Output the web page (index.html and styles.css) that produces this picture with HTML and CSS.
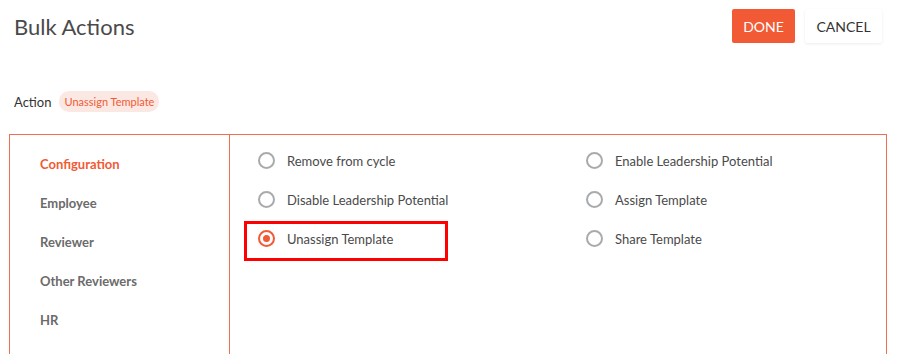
FILE: index.html
```html
<!DOCTYPE html>
<html lang="en">
<head>
    <meta charset="UTF-8">
    <meta name="viewport" content="width=device-width, initial-scale=1.0">
    <title>Bulk Actions</title>
    <link rel="stylesheet" href="styles.css">
</head>
<body>

    <div class="header">
        <h1>Bulk Actions</h1>
        <div class="buttons">
            <button class="btn btn-done">DONE</button>
            <button class="btn btn-cancel">CANCEL</button>
        </div>
    </div>

    <!-- Selected action -->
    <div class="action-row">
        <span class="action-label">Action</span>
        <span class="badge">Unassign Template</span>
    </div>

    <div class="panel">
        <ul class="sidebar">
            <li class="active">Configuration</li>
            <li>Employee</li>
            <li>Reviewer</li>
            <li>Other Reviewers</li>
            <li>HR</li>
        </ul>

        <div class="options">
            <label class="option"><span class="radio"></span>Remove from cycle</label>
            <label class="option"><span class="radio"></span>Enable Leadership Potential</label>
            <label class="option"><span class="radio"></span>Disable Leadership Potential</label>
            <label class="option"><span class="radio"></span>Assign Template</label>
            <label class="option selected highlight"><span class="radio"></span>Unassign Template</label>
            <label class="option"><span class="radio"></span>Share Template</label>
        </div>
    </div>

</body>
</html>
```

FILE: styles.css
```css
body {
    margin: 0;
    font-family: Lato, "Open Sans", sans-serif;
    color: #4a4a4a;
    background-color: #fff;
    overflow: hidden;
}
.header {
    display: flex;
    justify-content: space-between;
    align-items: center;
    padding: 9px 15px 0 14px;
    height: 34px;
}
h1 {
    margin: 0;
    font-size: 22px;
    font-weight: 400;
    color: #4a4a4a;
}
.buttons {
    display: flex;
    gap: 10px;
}
.btn {
    height: 34px;
    font-family: inherit;
    font-size: 14px;
    border: none;
    border-radius: 2px;
    cursor: pointer;
}
.btn-done {
    width: 63px;
    background-color: #f15a35;
    color: #fff;
}
.btn-cancel {
    width: 77px;
    background-color: #fff;
    color: #333;
    box-shadow: 0 1px 3px rgba(0, 0, 0, 0.08);
}
.action-row {
    display: flex;
    align-items: center;
    gap: 8px;
    margin: 48px 0 0 14px;
    height: 21px;
}
.action-label {
    font-size: 13px;
    color: #333;
}
.badge {
    background-color: #fce8e3;
    color: #f15a35;
    font-size: 11px;
    padding: 0 5px;
    height: 21px;
    line-height: 21px;
    border-radius: 10px;
}
.panel {
    display: flex;
    margin: 22px 0 0 9px;
    width: 876px;
    height: 240px;
    border: 1px solid #ee7050;
}
.sidebar {
    list-style: none;
    margin: 0;
    padding: 20px 0 0 30px;
    width: 189px;
    border-right: 1px solid #ee7050;
}
.sidebar li {
    font-size: 13px;
    font-weight: 700;
    color: #6b6b6b;
    height: 39px;
    line-height: 19px;
}
.sidebar li.active {
    color: #f15a35;
}
.options {
    display: grid;
    grid-template-columns: 328px 1fr;
    grid-auto-rows: 39px;
    padding: 17px 0 0 28px;
    align-content: start;
}
.option {
    position: relative;
    display: flex;
    align-items: center;
    gap: 12px;
    font-size: 13px;
    color: #4a4a4a;
    height: 17px;
}
.radio {
    width: 13px;
    height: 13px;
    border: 2px solid #a8abae;
    border-radius: 50%;
    position: relative;
}
.selected .radio {
    border-color: #f15a35;
}
.selected .radio::after {
    content: "";
    position: absolute;
    top: 3px;
    left: 3px;
    width: 7px;
    height: 7px;
    border-radius: 50%;
    background-color: #f15a35;
}
/* annotation box drawn around the chosen option */
.highlight::before {
    content: "";
    position: absolute;
    left: -14px;
    top: -9px;
    width: 198px;
    height: 34px;
    border: 3px solid #f00;
}
```
